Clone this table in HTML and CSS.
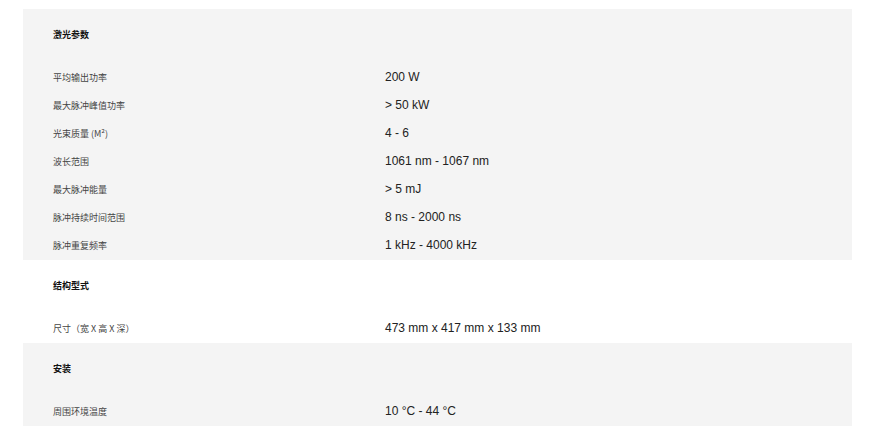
FILE: index.html
```html
<!DOCTYPE html>
<html lang="zh-CN">
<head>
    <meta charset="UTF-8">
    <title>技术参数</title>
    <link rel="stylesheet" href="styles.css">
</head>
<body>
    <main class="specs">
        <section class="group shade">
            <h4>激光参数</h4>
            <div class="row"><span class="label">平均输出功率</span><span class="value">200 W</span></div>
            <div class="row"><span class="label">最大脉冲峰值功率</span><span class="value">&gt; 50 kW</span></div>
            <div class="row"><span class="label">光束质量 (M²)</span><span class="value">4 - 6</span></div>
            <div class="row"><span class="label">波长范围</span><span class="value">1061 nm - 1067 nm</span></div>
            <div class="row"><span class="label">最大脉冲能量</span><span class="value">&gt; 5 mJ</span></div>
            <div class="row"><span class="label">脉冲持续时间范围</span><span class="value">8 ns - 2000 ns</span></div>
            <div class="row"><span class="label">脉冲重复频率</span><span class="value">1 kHz - 4000 kHz</span></div>
        </section>
        <section class="group">
            <h4>结构型式</h4>
            <div class="row"><span class="label">尺寸（宽 X 高 X 深）</span><span class="value">473 mm x 417 mm x 133 mm</span></div>
        </section>
        <section class="group shade">
            <h4>安装</h4>
            <div class="row"><span class="label">周围环境温度</span><span class="value">10 °C - 44 °C</span></div>
        </section>
    </main>
</body>
</html>
```

FILE: styles.css
```css
body{
    margin: 0;
    padding: 9px 0 0 23px;
    background: #fff;
    font-family: "Noto Sans CJK SC", "Liberation Sans", sans-serif;
    color: #333;
}
.specs{
    width: 829px;
}
.group{
    padding: 12px 30px 1px;
}
.group.shade{
    background: #f4f4f4;
}
.group h4{
    margin: 0 0 14px;
    height: 28px;
    line-height: 28px;
    font-size: 9px;
    font-weight: 700;
    color: #111;
}
.row{
    display: grid;
    grid-template-columns: 332px 1fr;
    align-items: center;
    height: 28px;
}
.label{
    font-size: 9px;
    color: #444;
}
.value{
    font-family: "Liberation Sans", Arial, sans-serif;
    font-size: 12px;
    color: #222;
}
```
